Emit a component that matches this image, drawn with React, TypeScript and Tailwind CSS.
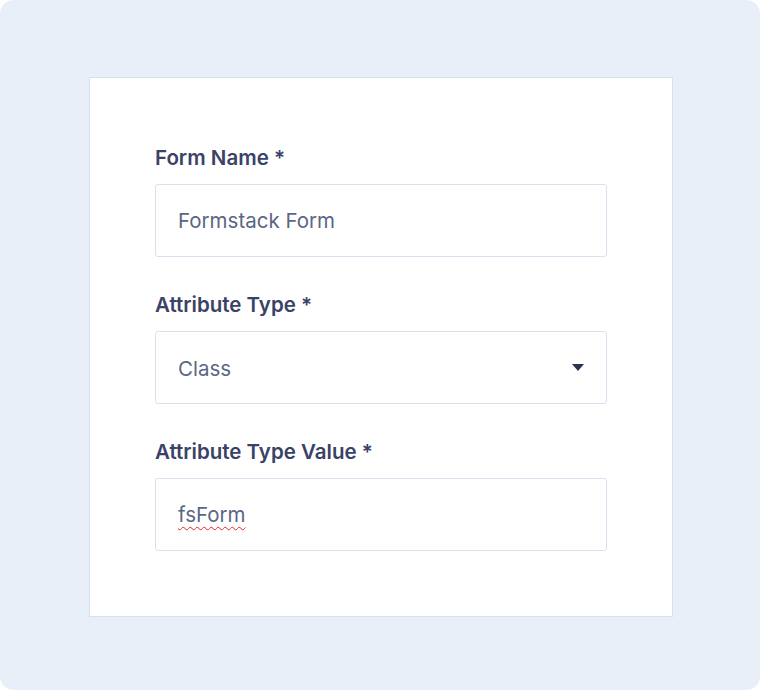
import { useState } from 'react';

function Field({ label, children }: { label: string; children: React.ReactNode }) {
  return (
    <div className="mb-[36px] last:mb-0">
      <label className="block h-[24px] leading-[24px] mb-[14px] text-[20.5px] font-semibold text-[#3a4266]">
        {label}
      </label>
      {children}
    </div>
  );
}

export default function App() {
  const [name, setName] = useState('Formstack Form');
  const [type, setType] = useState('Class');
  const [value, setValue] = useState('fsForm');

  const inputClass =
    'w-full h-[73px] px-[22px] bg-white border border-[#d8e2ef] rounded-[3px] text-[20.5px] text-[#5b6684] outline-none';

  return (
    <div
      className="w-[760px] h-[690px] bg-[#e8eff8] rounded-[14px] pl-[89px] pt-[77px]"
      style={{ fontFamily: 'Inter, "Noto Sans", sans-serif' }}
    >
      <div className="w-[584px] h-[540px] bg-white border border-[#d5e1ef] pt-[68px] pb-[64px] px-[65px]">
        <Field label="Form Name *">
          <input className={inputClass} value={name} onChange={(e) => setName(e.target.value)} />
        </Field>

        <Field label="Attribute Type *">
          <div className="relative">
            <select
              className={inputClass + ' appearance-none pt-[4px]'}
              value={type}
              onChange={(e) => setType(e.target.value)}
            >
              <option>Class</option>
              <option>ID</option>
            </select>
            {/* caret */}
            <svg
              className="absolute right-[23px] top-1/2 -translate-y-1/2 pointer-events-none"
              width="12"
              height="8"
              viewBox="0 0 12 8"
            >
              <path d="M0 0 H12 L6 7 Z" fill="#2c3350" />
            </svg>
          </div>
        </Field>

        <Field label="Attribute Type Value *">
          <div className="relative">
            <input className={inputClass} value={value} onChange={(e) => setValue(e.target.value)} />
            {/* spellcheck squiggle */}
            <span
              aria-hidden
              className="absolute left-[23px] top-0 h-[73px] leading-[73px] text-[20.5px] text-transparent underline decoration-wavy decoration-[#e0262b] decoration-1 underline-offset-[4px] pointer-events-none"
            >
              {value}
            </span>
          </div>
        </Field>
      </div>
    </div>
  );
}
